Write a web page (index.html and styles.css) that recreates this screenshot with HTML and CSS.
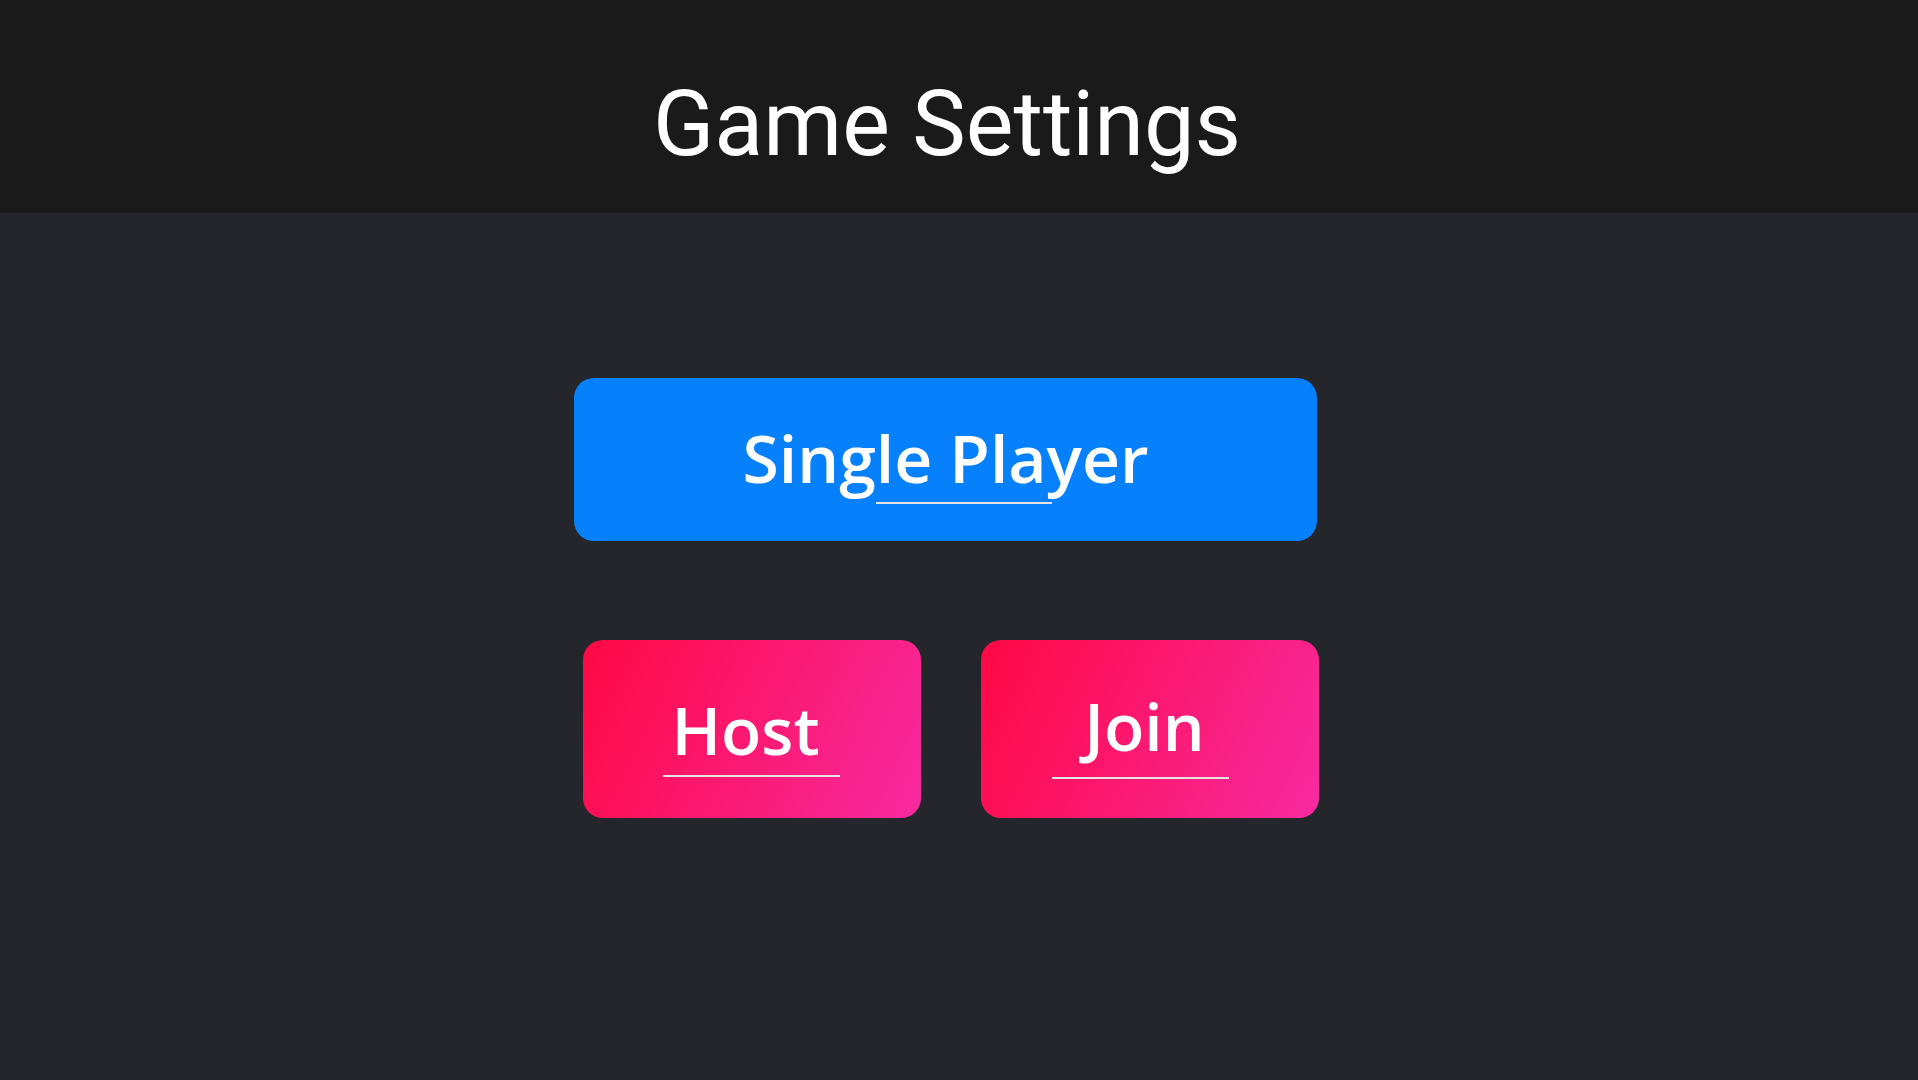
FILE: index.html
```html
<!DOCTYPE html>
<html lang="en">
<head>
<meta charset="utf-8">
<title>Game Settings</title>
<link rel="stylesheet" href="styles.css">
</head>
<body>
  <header class="topbar">
    <h1 class="title">Game Settings</h1>
  </header>
  <main class="content">
    <div class="menu">
      <button class="btn btn-single">Single Player</button>
      <div class="row">
        <button class="btn btn-multi btn-host">Host</button>
        <button class="btn btn-multi btn-join">Join</button>
      </div>
    </div>
  </main>
</body>
</html>
```

FILE: styles.css
```css
html, body {
  margin: 0;
  padding: 0;
}
body {
  background: #25262b;
  width: 1918px;
  height: 1080px;
  overflow: hidden;
}
.topbar {
  height: 213px;
  box-sizing: border-box;
  background: #1a1a1a;
  padding-top: 80px;
  padding-right: 24px;
}
.title {
  margin: 0;
  text-align: center;
  font-family: Roboto, "Liberation Sans", sans-serif;
  font-weight: 400;
  font-size: 90px;
  line-height: 90px;
  color: #ffffff;
}
.content {
  display: flex;
  justify-content: center;
  padding-top: 165px;
  padding-right: 25px;
}
.menu {
  width: 745px;
  display: flex;
  flex-direction: column;
}
.btn {
  position: relative;
  border: none;
  margin: 0;
  padding: 0;
  display: flex;
  align-items: center;
  justify-content: center;
  font-family: "Open Sans", "Liberation Sans", sans-serif;
  font-weight: 600;
  font-size: 66px;
  line-height: 66px;
  color: #ffffff;
  border-radius: 20px;
  box-sizing: border-box;
  cursor: pointer;
}
.btn::after {
  content: "";
  position: absolute;
  height: 2px;
  width: 177px;
  background: #e4e4e4;
}
.btn-single {
  width: 743px;
  height: 163px;
  background: #0780fc;
  padding-bottom: 6px;
}
.btn-single::after {
  left: 302px;
  top: 124px;
  width: 176px;
}
.row {
  display: flex;
  gap: 60px;
  margin-top: 99px;
  margin-left: 9px;
}
.btn-multi {
  width: 338px;
  height: 178px;
  background: linear-gradient(115deg, #ff0844 0%, #f72aa0 100%);
}
.btn-host {
  padding-right: 13px;
}
.btn-host::after {
  left: 80px;
  top: 135px;
}
.btn-join {
  padding-right: 11px;
  padding-bottom: 9px;
}
.btn-join::after {
  left: 71px;
  top: 137px;
}
```
